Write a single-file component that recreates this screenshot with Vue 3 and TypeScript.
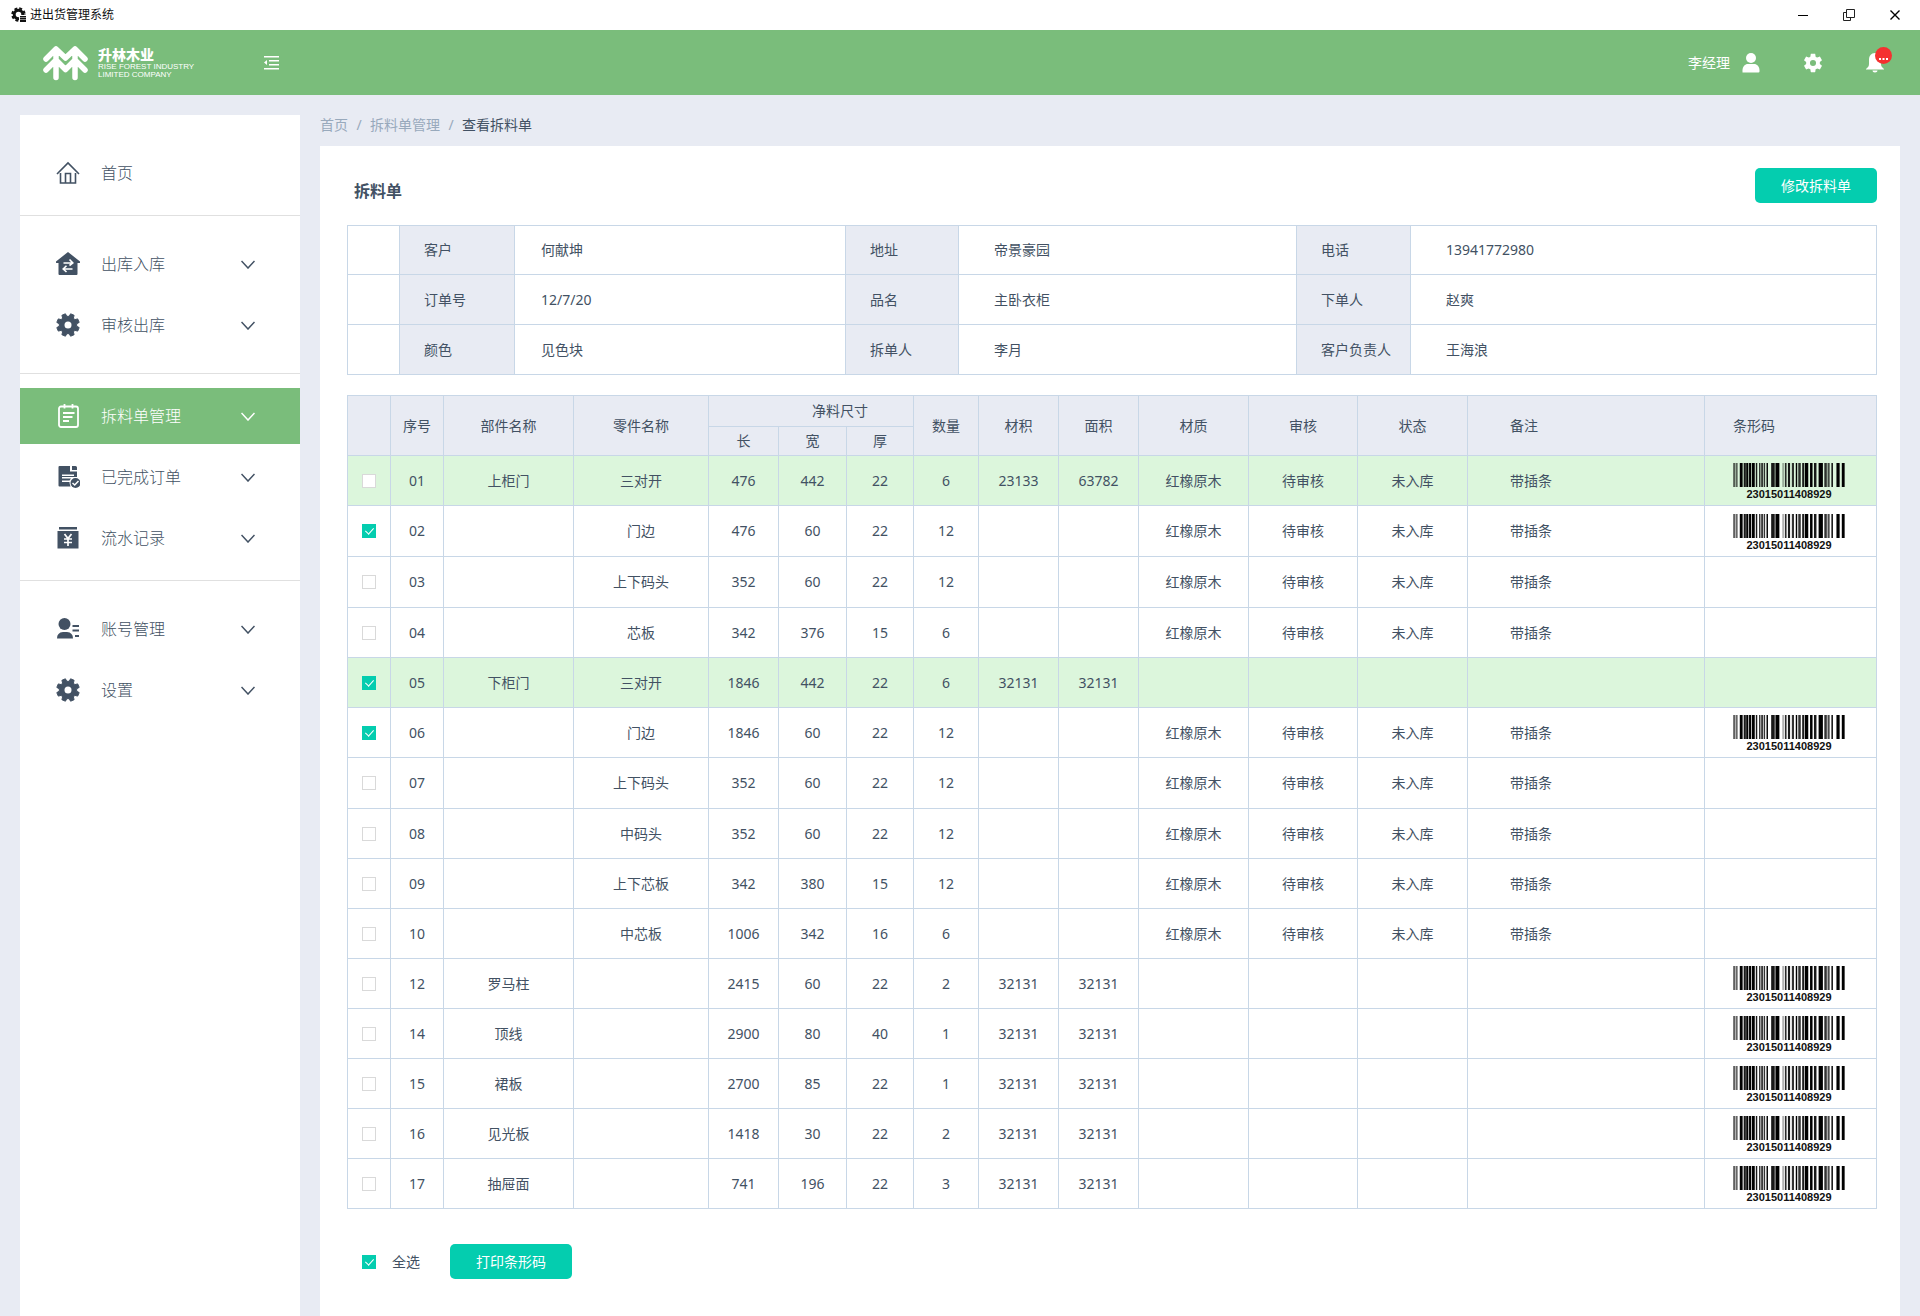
<script setup lang="ts">
import { ref } from 'vue'

interface MenuItem {
  label: string
  icon: string
  active?: boolean
}

interface PartRow {
  no: string
  part: string
  piece: string
  size: [number, number, number]
  count: number
  volume?: string
  area?: string
  material?: string
  audit?: string
  status?: string
  remark?: string
  barcode?: string
}

const menuGroups: MenuItem[][] = [
  [{ label: '首页', icon: 'home' }],
  [
    { label: '出库入库', icon: 'transfer' },
    { label: '审核出库', icon: 'gear' },
  ],
  [
    { label: '拆料单管理', icon: 'list', active: true },
    { label: '已完成订单', icon: 'done' },
    { label: '流水记录', icon: 'record' },
  ],
  [
    { label: '账号管理', icon: 'account' },
    { label: '设置', icon: 'gear' },
  ],
]

const info: [string, string][][] = [
  [['客户', '何献坤'], ['地址', '帝景豪园'], ['电话', '13941772980']],
  [['订单号', '12/7/20'], ['品名', '主卧衣柜'], ['下单人', '赵爽']],
  [['颜色', '见色块'], ['拆单人', '李月'], ['客户负责人', '王海浪']],
]

const code = '23015011408929'
const stock = { material: '红橡原木', audit: '待审核', status: '未入库', remark: '带插条' }

const rows: PartRow[] = [
  { no: '01', part: '上柜门', piece: '三对开', size: [476, 442, 22], count: 6, volume: '23133', area: '63782', ...stock, barcode: code },
  { no: '02', part: '', piece: '门边', size: [476, 60, 22], count: 12, ...stock, barcode: code },
  { no: '03', part: '', piece: '上下码头', size: [352, 60, 22], count: 12, ...stock },
  { no: '04', part: '', piece: '芯板', size: [342, 376, 15], count: 6, ...stock },
  { no: '05', part: '下柜门', piece: '三对开', size: [1846, 442, 22], count: 6, volume: '32131', area: '32131' },
  { no: '06', part: '', piece: '门边', size: [1846, 60, 22], count: 12, ...stock, barcode: code },
  { no: '07', part: '', piece: '上下码头', size: [352, 60, 22], count: 12, ...stock },
  { no: '08', part: '', piece: '中码头', size: [352, 60, 22], count: 12, ...stock },
  { no: '09', part: '', piece: '上下芯板', size: [342, 380, 15], count: 12, ...stock },
  { no: '10', part: '', piece: '中芯板', size: [1006, 342, 16], count: 6, ...stock },
  { no: '12', part: '罗马柱', piece: '', size: [2415, 60, 22], count: 2, volume: '32131', area: '32131', barcode: code },
  { no: '14', part: '顶线', piece: '', size: [2900, 80, 40], count: 1, volume: '32131', area: '32131', barcode: code },
  { no: '15', part: '裙板', piece: '', size: [2700, 85, 22], count: 1, volume: '32131', area: '32131', barcode: code },
  { no: '16', part: '见光板', piece: '', size: [1418, 30, 22], count: 2, volume: '32131', area: '32131', barcode: code },
  { no: '17', part: '抽屉面', piece: '', size: [741, 196, 22], count: 3, volume: '32131', area: '32131', barcode: code },
]

const selected = ref<string[]>(['02', '05', '06'])
const selectAll = ref(true)

function toggleAll() {
  selected.value = selectAll.value ? rows.map((r) => r.no) : []
}

// Bars of the barcode: start, width, darkness
const bars: [number, number, number][] = [
  [1, 4, 0.8], [7, 6, 0.6], [19, 8, 1], [30, 6, 0.9], [37, 6, 1], [45, 6, 1], [53, 8, 1],
  [64, 4, 0.9], [73, 4, 0.8], [79, 5, 0.8], [86, 4, 0.8], [94, 4, 1], [107, 10, 0.9],
  [119, 11, 1], [138, 6, 0.3], [146, 4, 0.9], [154, 6, 0.9], [165, 6, 0.8], [176, 4, 1],
  [183, 7, 0.8], [194, 5, 0.9], [201, 10, 1], [216, 7, 1], [227, 7, 0.9], [240, 12, 1],
  [256, 7, 0.8], [265, 6, 0.7], [276, 4, 1], [290, 9, 1], [305, 8, 1],
]
</script>

<template>
  <div class="app">
    <div class="titlebar">
      <svg class="app-icon" viewBox="0 0 16 16" width="16" height="16" aria-hidden="true">
        <circle cx="7.5" cy="7.5" r="4.3" fill="none" stroke="#111" stroke-width="3" />
        <circle cx="7.5" cy="7.5" r="6.2" fill="none" stroke="#111" stroke-width="2" stroke-dasharray="2.9 1.97" />
        <path d="M8 8h8v8H8z" fill="#fff" />
        <path d="M9 9h6v1.500H9zM9 11h6v1.500H9zM9 13h6v2H9z" fill="#111" />
      </svg>
      <span class="app-name">进出货管理系统</span>
      <div class="window-controls">
        <button type="button" aria-label="最小化">
          <svg viewBox="0 0 12 12" width="12" height="12"><path d="M1 6.500h10" stroke="#000" /></svg>
        </button>
        <button type="button" aria-label="还原">
          <svg viewBox="0 0 12 12" width="12" height="12" fill="none" stroke="#222">
            <path d="M3.500.500h8v8h-8z" /><path d="M3 3.500H.500v8h7V9" />
          </svg>
        </button>
        <button type="button" aria-label="关闭">
          <svg viewBox="0 0 12 12" width="12" height="12"><path d="M1.500 1.500l9 9M10.500 1.500l-9 9" stroke="#000" stroke-width="1.400" /></svg>
        </button>
      </div>
    </div>

    <header class="header">
      <div class="logo">
        <svg viewBox="0 0 45 36" width="45" height="36" aria-hidden="true" fill="none" stroke="#fff" stroke-width="5.500" stroke-linecap="round" stroke-linejoin="round">
          <path d="M3 14L13 4l9.500 9L32 4l10 10M3 25l10-10 9.500 9.500L32 15l10 10M13 5v27.500M32 5v27.500" />
        </svg>
        <div class="logo-text">
          <strong>升林木业</strong>
          <span>RISE FOREST INDUSTRY</span>
          <span>LIMITED COMPANY</span>
        </div>
      </div>
      <button type="button" class="fold" aria-label="收起菜单">
        <svg viewBox="0 0 15 14" width="15" height="14" fill="#fff">
          <path d="M0 0h15v1.500H0zM5 4h10v1.500H5zM5 8h10v1.500H5zM0 12h15v1.500H0zM3 4v5L0 6.500z" />
        </svg>
      </button>
      <div class="header-right">
        <button type="button" class="user">
          <span>李经理</span>
          <svg viewBox="0 0 18 20" width="18" height="20" fill="#fff" aria-hidden="true">
            <circle cx="9" cy="5" r="5" /><path d="M.500 19.500v-2c0-4 2.500-6.500 5.500-6.500h6c3 0 5.500 2.500 5.500 6.500v1q0 1-1 1h-15z" />
          </svg>
        </button>
        <button type="button" aria-label="设置">
          <svg viewBox="0 0 24 24" width="22" height="22" fill="#fff">
            <path d="M19.430 12.980c.040-.320.070-.640.070-.980s-.030-.660-.070-.980l2.110-1.650c.190-.150.240-.420.120-.640l-2-3.460c-.120-.220-.390-.300-.610-.220l-2.490 1c-.520-.400-1.080-.730-1.690-.980l-.380-2.650C14.460 2.180 14.250 2 14 2h-4c-.250 0-.460.180-.490.420l-.380 2.650c-.610.250-1.170.590-1.690.980l-2.490-1c-.230-.090-.490 0-.610.220l-2 3.460c-.130.220-.070.490.120.640l2.110 1.650c-.040.320-.070.650-.070.980s.030.660.070.980l-2.110 1.650c-.190.150-.240.420-.120.640l2 3.460c.120.220.390.300.610.220l2.490-1c.520.400 1.080.730 1.690.980l.380 2.650c.030.240.240.420.490.420h4c.250 0 .460-.180.490-.420l.380-2.650c.610-.250 1.170-.590 1.690-.980l2.490 1c.230.090.490 0 .610-.220l2-3.460c.120-.220.070-.490-.120-.640l-2.110-1.650zM12 15.300a3.300 3.300 0 110-6.600 3.300 3.300 0 010 6.600z" />
          </svg>
        </button>
        <button type="button" class="bell" aria-label="消息">
          <svg viewBox="0 0 18 20" width="18" height="20" fill="#fff">
            <path d="M9 0c4 0 6 3 6 6.500V11c0 2 1 3.500 3 5v.500H0V16c2-1.500 3-3 3-5V6.500C3 3 5 0 9 0zM6.500 17.500h5c0 1.300-1 2-2.500 2s-2.500-.700-2.500-2z" />
          </svg>
          <svg class="badge" viewBox="0 0 17 17" width="17" height="17" aria-hidden="true">
            <circle cx="8.500" cy="8.500" r="8.500" fill="#f53030" />
            <path d="M4 11h2v2H4zM7.500 11h2v2h-2zM11 11h2v2h-2z" fill="#fff" />
          </svg>
        </button>
      </div>
    </header>

    <div class="body">
      <nav class="sidebar">
        <div v-for="(group, g) in menuGroups" :key="g" class="group" :class="'group-' + g">
          <a v-for="item in group" :key="item.label" href="#" class="item" :class="{ active: item.active }">
            <svg v-if="item.icon === 'home'" class="icon" viewBox="0 0 24 24" fill="none" stroke="currentColor" stroke-width="1.600">
              <path d="M1 13L12 2l11 11M4.500 12v10h15V12M9.500 22v-9.500h5V22" />
            </svg>
            <svg v-else-if="item.icon === 'transfer'" class="icon" viewBox="0 0 24 24">
              <path fill="currentColor" d="M12 0l12 9.500q.5 1.500-1 1.500h-1.500v11q0 1-1 1h-17q-1 0-1-1V11H1q-1.500 0-1-1.500z" />
              <path fill="none" stroke="#fff" stroke-width="1.600" d="M7.500 11h9M13.500 7.500L16.800 11l-3.300 2.500M16.500 17h-9M10.500 20L7.200 17l3.300-3.200" />
            </svg>
            <svg v-else-if="item.icon === 'gear'" class="icon" viewBox="0 0 24 24">
              <path
                fill="currentColor"
                stroke="currentColor"
                stroke-linejoin="round"
                d="M13.200 3.300L14.600.800l3.500 1.500-.700 2.800 1.500 1.500 2.800-.700 1.500 3.500-2.500 1.400v2.400l2.500 1.400-1.500 3.500-2.800-.700-1.500 1.500.700 2.800-3.500 1.500-1.400-2.500h-2.400l-1.400 2.500-3.500-1.500.700-2.800-1.500-1.500-2.800.700-1.500-3.500 2.500-1.400v-2.400L.800 9.400l1.500-3.500 2.800.700 1.500-1.500-.700-2.800L9.400.800l1.400 2.500z"
              />
              <circle cx="12" cy="12" r="3.500" fill="#fff" />
            </svg>
            <svg v-else-if="item.icon === 'list'" class="icon" viewBox="0 0 24 24" fill="none" stroke="currentColor" stroke-width="1.800">
              <rect x="3" y="2.500" width="19" height="20.500" rx="2" /><path d="M8.500 0v4.500M16.500 0v4.500M7 9h11.500M7 13h9.500M7 17h6" />
            </svg>
            <svg v-else-if="item.icon === 'done'" class="icon" viewBox="0 0 24 24">
              <path fill="currentColor" d="M3.500 1H14v5.500h7V12H6v1.500h9l-1.500 2H6V17h7.500q0 2 1 4.500h-11Q2.500 21.500 2.500 20.500V2q0-1 1-1zM16 1h3.500q1.500 0 1.500 1.500V5h-5z" />
              <path fill="#fff" d="M6 9.500h12V11H6z" />
              <circle cx="19.500" cy="18" r="5" fill="currentColor" />
              <path fill="none" stroke="#fff" stroke-width="1.500" d="M16.500 18l2.200 2 3.800-4" />
            </svg>
            <svg v-else-if="item.icon === 'record'" class="icon" viewBox="0 0 24 24">
              <path fill="currentColor" d="M3 1h18v2.500H3zM1.500 5h21v17.500h-21z" />
              <path fill="none" stroke="#fff" stroke-width="1.700" d="M8.500 8l3.500 4.500L15.500 8M12 12v8M8 13h8M8 16.500h8" />
            </svg>
            <svg v-else class="icon" viewBox="0 0 24 24" fill="currentColor">
              <circle cx="8.500" cy="7" r="6" /><path d="M1 21.500q0-6 6-6.500h4q6 .500 6 6.500zM16.500 8H23v2h-6.500zM16.500 12.500H23v2h-6.500zM19 18h4v2h-4z" />
            </svg>
            <span class="label">{{ item.label }}</span>
            <svg v-if="item.icon !== 'home'" class="chevron" viewBox="0 0 14 9" width="14" height="9" fill="none" stroke="currentColor" stroke-width="1.500">
              <path d="M.500 1L7 8l6.500-7" />
            </svg>
          </a>
        </div>
      </nav>

      <main class="content">
        <nav class="crumbs" aria-label="面包屑">
          <a href="#">首页</a><span class="sep">/</span><a href="#">拆料单管理</a><span class="sep">/</span><span class="current">查看拆料单</span>
        </nav>

        <section class="card">
          <div class="card-head">
            <h1>拆料单</h1>
            <button type="button" class="primary">修改拆料单</button>
          </div>

          <table class="info">
            <colgroup>
              <col class="i0" /><col class="i1" /><col class="i2" /><col class="i3" /><col class="i4" /><col class="i5" /><col />
            </colgroup>
            <tbody>
              <tr v-for="(line, i) in info" :key="i">
                <td></td>
                <template v-for="[name, value] in line" :key="name">
                  <th scope="row">{{ name }}</th>
                  <td>{{ value }}</td>
                </template>
              </tr>
            </tbody>
          </table>

          <table class="parts">
            <colgroup>
              <col v-for="n in 15" :key="n" :class="'c' + n" />
            </colgroup>
            <thead>
              <tr class="head-top">
                <th rowspan="2"></th>
                <th rowspan="2">序号</th>
                <th rowspan="2">部件名称</th>
                <th rowspan="2">零件名称</th>
                <th colspan="3" class="size">净料尺寸</th>
                <th rowspan="2">数量</th>
                <th rowspan="2">材积</th>
                <th rowspan="2">面积</th>
                <th rowspan="2">材质</th>
                <th rowspan="2">审核</th>
                <th rowspan="2">状态</th>
                <th rowspan="2" class="remark">备注</th>
                <th rowspan="2" class="code">条形码</th>
              </tr>
              <tr class="head-sub">
                <th>长</th>
                <th>宽</th>
                <th>厚</th>
              </tr>
            </thead>
            <tbody>
              <tr v-for="row in rows" :key="row.no" :class="{ door: row.piece === '三对开' }">
                <td><input v-model="selected" type="checkbox" :value="row.no" :aria-label="'选择 ' + row.no" /></td>
                <td>{{ row.no }}</td>
                <td>{{ row.part }}</td>
                <td>{{ row.piece }}</td>
                <td v-for="(s, k) in row.size" :key="k">{{ s }}</td>
                <td>{{ row.count }}</td>
                <td>{{ row.volume }}</td>
                <td>{{ row.area }}</td>
                <td>{{ row.material }}</td>
                <td>{{ row.audit }}</td>
                <td>{{ row.status }}</td>
                <td class="remark">{{ row.remark }}</td>
                <td class="code">
                  <div v-if="row.barcode" class="barcode">
                    <svg viewBox="0 0 314 24" width="112" height="24" preserveAspectRatio="none" aria-hidden="true">
                      <rect v-for="[x, w, o] in bars" :key="x" :x="x" y="0" :width="w" height="24" :fill-opacity="o" />
                    </svg>
                    <span>{{ row.barcode }}</span>
                  </div>
                </td>
              </tr>
            </tbody>
          </table>

          <div class="actions">
            <label><input v-model="selectAll" type="checkbox" @change="toggleAll" />全选</label>
            <button type="button" class="primary">打印条形码</button>
          </div>
        </section>
      </main>
    </div>
  </div>
</template>

<style>
body {
  margin: 0;
  background: #e8ebf3;
}
</style>

<style scoped>
.app {
  display: flex;
  flex-direction: column;
  min-height: 100vh;
  font-family: "Noto Sans", "Noto Sans CJK SC", sans-serif;
  font-size: 14px;
  line-height: 20px;
  color: #425163;
}

.app *,
.app *::after {
  box-sizing: border-box;
}

svg {
  display: block;
  flex: none;
}

a {
  color: inherit;
  text-decoration: none;
}

button {
  padding: 0;
  border: 0;
  background: none;
  font: inherit;
  color: inherit;
  cursor: pointer;
}

.titlebar {
  display: flex;
  align-items: center;
  gap: 3px;
  height: 30px;
  padding: 0 19px 0 11px;
  background: #fff;
  color: #111;
  font-size: 12px;
}

.window-controls {
  display: flex;
  gap: 34px;
  margin-left: auto;
}

.header {
  display: flex;
  align-items: center;
  height: 65px;
  padding: 0 36px 0 43px;
  background: #7abd7b;
  color: #fff;
}

.logo {
  display: flex;
  gap: 10px;
  width: 221px;
}

.logo-text {
  display: flex;
  flex-direction: column;
  font: 8px/8px "Liberation Sans", sans-serif;
}

.logo-text strong {
  font: 900 14px/18px "Noto Sans CJK SC", sans-serif;
}

.header-right {
  display: flex;
  align-items: center;
  gap: 42px;
  margin-left: auto;
}

.user {
  display: flex;
  align-items: center;
  gap: 12px;
}

.bell {
  position: relative;
}

.badge {
  position: absolute;
  top: -6px;
  left: 9px;
}

.body {
  display: flex;
  flex: 1;
  gap: 20px;
  padding: 20px 20px 0;
}

.sidebar {
  flex: none;
  width: 280px;
  background: #fff;
  font-size: 16px;
  font-weight: 300;
}

.group {
  display: flex;
  flex-direction: column;
  gap: 5px;
  padding: 20px 0;
  border-bottom: 1px solid #e0e0e0;
}

.group-0 {
  padding: 30px 0 14px;
}

.group-2 {
  padding: 14px 0;
}

.group-3 {
  border-bottom: 0;
}

.item {
  display: flex;
  align-items: center;
  height: 56px;
  padding: 0 45px 0 36px;
}

.active {
  background: #7abd7b;
  color: #fff;
}

.icon {
  width: 24px;
  height: 24px;
}

.label {
  flex: 1;
  margin-left: 21px;
  line-height: 24px;
}

.content {
  display: flex;
  flex: 1;
  flex-direction: column;
  min-width: 0;
}

.crumbs {
  display: flex;
  gap: 8px;
  margin-bottom: 11px;
  color: #98a9bc;
}

.sep {
  width: 6px;
  text-align: center;
}

.current {
  color: #425163;
}

.card {
  flex: 1;
  padding: 22px 23px 36px 27px;
  background: #fff;
}

.card-head {
  display: flex;
  align-items: flex-end;
  justify-content: space-between;
  margin-bottom: 22px;
}

h1 {
  margin: 0 0 0 7px;
  font-size: 16px;
  line-height: 24px;
}

.primary {
  width: 122px;
  height: 35px;
  border-radius: 5px;
  background: #04cdaf;
  color: #fff;
}

table {
  width: 100%;
  border-collapse: collapse;
  table-layout: fixed;
}

th,
td {
  padding: 0;
  border: 1px solid #c8d7e7;
  font-weight: 400;
}

th {
  background: #e8ebf3;
}

.info {
  margin-bottom: 20px;
  text-align: left;
}

.info tr {
  height: 50px;
}

.info tr:first-child {
  height: 49px;
}

.info th {
  padding-left: 24px;
}

.info td {
  padding-left: 26px;
}

.info td:nth-child(n + 5) {
  padding-left: 35px;
}

.i0 { width: 52px; }
.i1 { width: 115px; }
.i2 { width: 331px; }
.i3 { width: 113px; }
.i4 { width: 338px; }
.i5 { width: 114px; }

.parts {
  text-align: center;
}

.c1 { width: 43px; }
.c2 { width: 53px; }
.c3 { width: 130px; }
.c4 { width: 135px; }
.c5 { width: 70px; }
.c6 { width: 68px; }
.c7 { width: 67px; }
.c8 { width: 65px; }
.c9,
.c10 { width: 80px; }
.c11 { width: 110px; }
.c12 { width: 109px; }
.c13 { width: 110px; }
.c15 { width: 172px; }

.head-top {
  height: 31px;
}

.head-sub {
  height: 29px;
}

.parts tbody tr {
  height: 50px;
}

.parts tbody tr:nth-child(2),
.parts tbody tr:nth-child(3),
.parts tbody tr:nth-child(7) {
  height: 51px;
}

.door {
  background: #dcf6dc;
}

.size {
  padding-left: 58px;
}

.remark {
  padding-left: 42px;
  text-align: left;
}

.code {
  padding-left: 28px;
  text-align: left;
}

.barcode {
  display: flex;
  flex-direction: column;
  align-items: center;
  gap: 1px;
  width: 112px;
  padding-top: 2px;
  color: #111;
  font: bold 11px/12px "Liberation Sans", sans-serif;
}

input[type="checkbox"] {
  display: block;
  position: relative;
  flex: none;
  width: 14px;
  height: 14px;
  margin: 0 auto;
  border: 1px solid #d9d9d9;
  background: #fff;
  appearance: none;
}

input[type="checkbox"]:checked {
  border-color: #04cdaf;
  background: #04cdaf;
}

input[type="checkbox"]:checked::after {
  content: "";
  position: absolute;
  top: 1px;
  left: 4px;
  width: 5px;
  height: 8px;
  border: solid #fff;
  border-width: 0 1px 1px 0;
  transform: rotate(42deg);
}

.actions {
  display: flex;
  align-items: center;
  gap: 30px;
  margin: 35px 0 0 15px;
}

.actions label {
  display: flex;
  align-items: center;
  gap: 16px;
}
</style>
